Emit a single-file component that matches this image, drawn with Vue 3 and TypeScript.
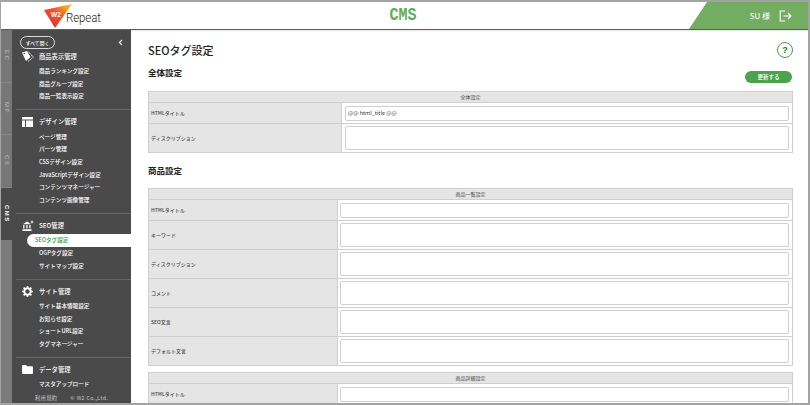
<script setup lang="ts">
interface Group { title: string; icon: string; items: string[] }
const tabs = [
  { label: 'EC', active: false },
  { label: 'MP', active: false },
  { label: 'CS', active: false },
  { label: 'CMS', active: true },
]
const groups: Group[] = [
  { title: '商品表示管理', icon: 'tag', items: ['商品ランキング設定', '商品グループ設定', '商品一覧表示設定'] },
  { title: 'デザイン管理', icon: 'layout', items: ['ページ管理', 'パーツ管理', 'CSSデザイン設定', 'JavaScriptデザイン設定', 'コンテンツマネージャー', 'コンテンツ画像管理'] },
  { title: 'SEO管理', icon: 'seo', items: ['SEOタグ設定', 'OGPタグ設定', 'サイトマップ設定'] },
  { title: 'サイト管理', icon: 'gear', items: ['サイト基本情報設定', 'お知らせ設定', 'ショートURL設定', 'タグマネージャー'] },
  { title: 'データ管理', icon: 'folder', items: ['マスタアップロード'] },
]
const productRows = [
  { label: 'HTMLタイトル', tall: false },
  { label: 'キーワード', tall: true },
  { label: 'ディスクリプション', tall: true },
  { label: 'コメント', tall: true },
  { label: 'SEO文言', tall: true },
  { label: 'デフォルト文言', tall: true },
]
</script>

<template>
  <div class="frame">
    <header class="topbar">
      <div class="logo">
        <svg class="logo-mark" width="29" height="26" viewBox="0 0 29 26">
          <defs>
            <linearGradient id="lg" x1="0" y1="1" x2="1" y2="0">
              <stop offset="0" stop-color="#e8202c" />
              <stop offset="0.55" stop-color="#f0562a" />
              <stop offset="1" stop-color="#f7d21e" />
            </linearGradient>
          </defs>
          <polygon points="0,7 28,1 11,25" fill="url(#lg)" />
          <text x="7" y="13.5" class="logo-w2">W2</text>
        </svg>
        <span class="logo-text">Repeat</span>
      </div>
      <div class="cms-title">CMS</div>
      <div class="user">
        <span class="user-name">SU 様</span>
        <svg width="13" height="12" viewBox="0 0 13 12" fill="none" stroke="#fff" stroke-width="1.1">
          <path d="M6 1H1.200v10H6" />
          <path d="M4.500 6H12M9 3l3 3-3 3" />
        </svg>
      </div>
    </header>

    <div class="body">
      <nav class="tabs">
        <div v-for="t in tabs" :key="t.label" class="tab" :class="{ active: t.active }">
          <span>{{ t.label }}</span>
        </div>
      </nav>

      <aside class="side">
        <div class="side-top">
          <button class="open-all">すべて開く</button>
          <svg width="5" height="7" viewBox="0 0 5 7" fill="none" stroke="#eee" stroke-width="1.2">
            <path d="M4 1 1.400 3.500 4 6" />
          </svg>
        </div>
        <section v-for="g in groups" :key="g.title" class="group">
          <h3 class="group-head">
            <span class="group-icon">
              <svg v-if="g.icon === 'tag'" width="12" height="11" viewBox="0 0 12 11">
                <path d="M0 1.500 5 0l3.500 6L4 10z" fill="#fff" />
                <path d="M6.500 .8l4.800 5.400L6.200 10.400" fill="none" stroke="#fff" stroke-width="1" stroke-dasharray="1.400 .7" />
                <circle cx="2.300" cy="2.500" r=".8" fill="#4a4a4a" />
              </svg>
              <svg v-else-if="g.icon === 'layout'" width="11" height="10" viewBox="0 0 11 10" fill="#fff">
                <path d="M0 0h11v2.500H0zM0 3.500h3V10H0zM4 3.500h7V10H4z" />
              </svg>
              <svg v-else-if="g.icon === 'seo'" width="12" height="11" viewBox="0 0 12 11" fill="#fff">
                <path d="M1 4.200 5 1.500l4 2.700z" />
                <path d="M1.200 5h1.300v3.600H1.200zM4.300 5h1.300v3.600H4.300zM7.300 5h1.300v3.600H7.300zM.5 9.300h9V11h-9z" />
                <path d="M10 0l.5 1.500 1.500.5-1.500.5L10 4l-.5-1.500L8 2l1.500-.5z" />
              </svg>
              <svg v-else-if="g.icon === 'gear'" width="11" height="11" viewBox="0 0 11 11">
                <circle cx="5.500" cy="5.500" r="3.200" fill="none" stroke="#fff" stroke-width="2" />
                <path d="M5.500 0v11M0 5.500h11M1.600 1.600l7.800 7.800M9.400 1.600l-7.800 7.800" stroke="#fff" stroke-width="1.700" stroke-dasharray="1.800 7.400 1.800" />
              </svg>
              <svg v-else width="11" height="9" viewBox="0 0 11 9" fill="#fff">
                <path d="M0 1a1 1 0 0 1 1-1h3l1 1.200h5a1 1 0 0 1 1 1V8a1 1 0 0 1-1 1H1a1 1 0 0 1-1-1z" />
              </svg>
            </span>
            {{ g.title }}
          </h3>
          <ul class="items">
            <li v-for="it in g.items" :key="it" class="item" :class="{ current: it === 'SEOタグ設定' }">{{ it }}</li>
          </ul>
        </section>
        <footer class="side-foot">
          <span class="terms">利用規約</span>
          <span>© W2 Co.,Ltd.</span>
        </footer>
      </aside>

      <main class="content">
        <div class="title-row">
          <h1 class="page-title">SEOタグ設定</h1>
          <span class="help">?</span>
        </div>
        <div class="sub-row">
          <h2 class="section-title">全体設定</h2>
          <button class="update">更新する</button>
        </div>

        <table class="form-table wide">
          <colgroup><col class="col-label" /><col /></colgroup>
          <thead><tr><th colspan="2">全体設定</th></tr></thead>
          <tbody>
            <tr class="short">
              <td class="label">HTMLタイトル</td>
              <td class="field"><div class="input filled">@@ html_title @@</div></td>
            </tr>
            <tr class="tall">
              <td class="label">ディスクリプション</td>
              <td class="field"><div class="input area"></div></td>
            </tr>
          </tbody>
        </table>

        <h2 class="section-title second">商品設定</h2>

        <table class="form-table">
          <colgroup><col class="col-label" /><col /></colgroup>
          <thead><tr><th colspan="2">商品一覧設定</th></tr></thead>
          <tbody>
            <tr v-for="r in productRows" :key="r.label" :class="r.tall ? 'tall' : 'short'">
              <td class="label">{{ r.label }}</td>
              <td class="field"><div class="input" :class="{ area: r.tall }"></div></td>
            </tr>
          </tbody>
        </table>

        <table class="form-table next">
          <colgroup><col class="col-label" /><col /></colgroup>
          <thead><tr><th colspan="2">商品詳細設定</th></tr></thead>
          <tbody>
            <tr class="short">
              <td class="label">HTMLタイトル</td>
              <td class="field"><div class="input"></div></td>
            </tr>
          </tbody>
        </table>
      </main>
    </div>
  </div>
</template>

<style>
html, body { margin: 0; padding: 0; background: #fff; overflow: hidden; }
</style>

<style scoped>
* { box-sizing: border-box; }
.frame {
  width: 810px;
  height: 405px;
  border: solid #a3a3a3;
  border-width: 2px 2px 2px 1px;
  display: flex;
  flex-direction: column;
  overflow: hidden;
  font-family: "Noto Sans CJK JP", "Noto Sans", sans-serif;
  background: #fff;
}
.topbar {
  flex: none;
  height: 28px;
  border-bottom: 1px solid #1d8a1d;
  display: grid;
  grid-template-columns: 1fr auto 1fr;
  align-items: stretch;
}
.logo { display: flex; align-items: center; padding-left: 43px; }
.logo-w2 { font: 700 6.500px "Liberation Sans", sans-serif; fill: #fff; }
.logo-text {
  margin-left: -7px;
  margin-top: 3px;
  font: 300 11.500px "Roboto", sans-serif;
  letter-spacing: -0.1px;
  color: #222;
  transform: scaleY(1.15);
}
.cms-title {
  font: 700 15px "Liberation Mono", monospace;
  color: #62ac58;
  align-self: center;
  padding-right: 3px;
  transform: scaleY(1.2);
}
.user {
  justify-self: end;
  width: 119px;
  height: 27px;
  background: #73ad62;
  clip-path: polygon(18px 0, 100% 0, 100% 100%, 0 100%);
  display: flex;
  align-items: center;
  justify-content: flex-end;
  gap: 9px;
  padding-right: 16px;
  color: #fff;
}
.user-name { font-size: 8px; }

.body { flex: 1; min-height: 0; display: flex; }

.tabs { flex: none; width: 11px; background: #7b7b7b; display: flex; flex-direction: column; }
.tab {
  height: 52.500px;
  background: #777;
  border-bottom: 1px solid #858585;
  display: flex;
  align-items: center;
  justify-content: center;
  color: #bcbcbc;
  font: 400 6px "Liberation Sans", sans-serif;
  letter-spacing: 1.500px;
}
.tab span { writing-mode: vertical-rl; }
.tab.active { background: #4a4a4a; color: #fff; font-weight: 700; border-bottom: 0; }

.side {
  flex: none;
  width: 119px;
  background: #4a4a4a;
  color: #fff;
  padding: 0 0 0 4px;
  overflow: hidden;
}
.side-top {
  height: 19px;
  display: flex;
  align-items: center;
  justify-content: space-between;
  padding: 6px 8px 0 4px;
}
.open-all {
  width: 35px;
  height: 13px;
  padding: 0;
  border: 1px solid #ddd;
  border-radius: 7px;
  background: #4a4a4a;
  color: #fff;
  font: 500 4.800px "Noto Sans CJK JP", sans-serif;
}
.group { padding: 0 3px 6.300px 0; border-bottom: 1px solid #666; }
.group + .group { padding-top: 4.500px; }
.group:nth-last-of-type(1) { border-bottom: 0; padding-bottom: 0; }
.group-head {
  margin: 0 0 2px;
  height: 14px;
  display: flex;
  align-items: center;
  font-size: 6.300px;
  font-weight: 500;
}
.group-icon { width: 23px; padding-left: 6px; display: flex; align-items: center; }
.items { list-style: none; margin: 0; padding: 0; }
.item {
  height: 12.650px;
  line-height: 12.650px;
  padding-left: 23px;
  font-size: 5.600px;
  font-weight: 500;
  white-space: nowrap;
}
.item.current {
  margin: 0 -3px 0 11px;
  padding-left: 8px;
  background: #fff;
  color: #2f9a3f;
  border-radius: 7px 0 0 7px;
}
.side-foot {
  display: flex;
  padding: 3px 0 0 19px;
  font-size: 5.200px;
  line-height: 8px;
  color: #c8c8c8;
  letter-spacing: .4px;
}
.terms { margin-right: 13px; }

.content {
  flex: 1;
  min-width: 0;
  padding: 12px 15px 0 17px;
  overflow: hidden;
  box-shadow: inset 0 2px 2px -1px #e3e3e3;
}
.title-row { display: flex; justify-content: space-between; align-items: center; height: 16px; }
.page-title { margin: 0; font-size: 11px; font-weight: 500; color: #222; }
.help {
  width: 16px;
  height: 16px;
  border: 1px solid #3f9c4a;
  border-radius: 50%;
  display: flex;
  align-items: center;
  justify-content: center;
  font: 700 9px "Liberation Sans", sans-serif;
  color: #16761f;
}
.sub-row { display: flex; justify-content: space-between; align-items: flex-end; height: 25px; padding-right: 1px; }
.section-title { margin: 0; font-size: 8.500px; font-weight: 700; color: #222; line-height: 12px; align-self: flex-start; }
.sub-row .section-title { margin-top: 8px; }
.second { margin: 11px 0 12px; }
.update {
  width: 47px;
  height: 12px;
  padding: 0;
  border: 0;
  border-radius: 6px;
  background: #4ba34d;
  color: #fff;
  font: 500 5.500px "Noto Sans CJK JP", sans-serif;
}
.form-table {
  width: 645px;
  border-collapse: collapse;
  table-layout: fixed;
  margin: 8px 0 0;
  font-size: 5px;
  color: #444;
}
.form-table th,
.form-table td { border: 1px solid #cfcfcf; }
.form-table th {
  height: 11px;
  padding: 0;
  background: #e5e5e5;
  font-weight: 400;
  text-align: center;
  line-height: 10px;
}
.col-label { width: 189px; }
.wide .col-label { width: 193px; }
.label { padding: 0 0 1px 2px; background: #e5e5e5; font-weight: 500; }
.field { padding: 2px 3px 2px 2px; background: #fff; }
.short { height: 21px; }
.tall { height: 29px; }
.form-table.next { margin-top: 6px; }
.input {
  height: 15px;
  border: 1px solid #cfcfcf;
  border-radius: 2px;
  padding-left: 2px;
  line-height: 13px;
  font-size: 5.500px;
  color: #333;
  background: #fff;
}
.wide .field { padding-left: 3px; }
.area { height: 24px; }
</style>
